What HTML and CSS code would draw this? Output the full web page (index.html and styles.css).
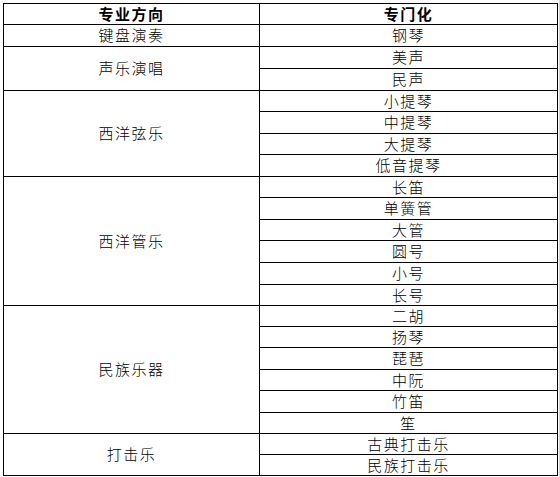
FILE: index.html
```html
<!DOCTYPE html>
<html lang="zh-CN">
<head>
<meta charset="utf-8">
<title>专业方向</title>
<link rel="stylesheet" href="styles.css">
</head>
<body>
<table class="majors">
  <colgroup><col class="c1"><col class="c2"></colgroup>
  <thead>
    <tr class="head"><th>专业方向</th><th>专门化</th></tr>
  </thead>
  <tbody>
    <tr class="t"><td>键盘演奏</td><td>钢琴</td></tr>
    <tr class="t"><td rowspan="2">声乐演唱</td><td>美声</td></tr>
    <tr class="t"><td>民声</td></tr>
    <tr class="s"><td rowspan="4">西洋弦乐</td><td>小提琴</td></tr>
    <tr class="t"><td>中提琴</td></tr>
    <tr class="s"><td>大提琴</td></tr>
    <tr class="t"><td>低音提琴</td></tr>
    <tr class="s"><td rowspan="6">西洋管乐</td><td>长笛</td></tr>
    <tr class="t"><td>单簧管</td></tr>
    <tr class="s"><td>大管</td></tr>
    <tr class="t"><td>圆号</td></tr>
    <tr class="t"><td>小号</td></tr>
    <tr class="s"><td>长号</td></tr>
    <tr class="s"><td rowspan="6">民族乐器</td><td>二胡</td></tr>
    <tr class="s"><td>扬琴</td></tr>
    <tr class="t"><td>琵琶</td></tr>
    <tr class="s"><td>中阮</td></tr>
    <tr class="t"><td>竹笛</td></tr>
    <tr class="s"><td>笙</td></tr>
    <tr class="s"><td rowspan="2">打击乐</td><td>古典打击乐</td></tr>
    <tr class="s"><td>民族打击乐</td></tr>
  </tbody>
</table>
</body>
</html>
```
FILE: styles.css
```css
html, body {
  margin: 0;
  padding: 0;
  background: #ffffff;
}

.majors {
  margin: 3px 0 0 3px;
  width: 554px;
  table-layout: fixed;
  border-collapse: collapse;
  border: 1px solid #000;
  font-family: "Noto Sans CJK SC", "Noto Sans", sans-serif;
  font-size: 15px;
  color: #000;
}

.c1 { width: 256px; }
.c2 { width: 298px; }

.majors th,
.majors td {
  border: 1px solid #000;
  padding: 0 0 1px 0;
  text-align: center;
  vertical-align: middle;
  line-height: 16px;
  letter-spacing: 1.5px;
  font-weight: 300;
  white-space: nowrap;
}

.majors th {
  font-weight: 700;
}

.head { height: 21px; }
.t { height: 22px; }
.s { height: 21px; }
```
